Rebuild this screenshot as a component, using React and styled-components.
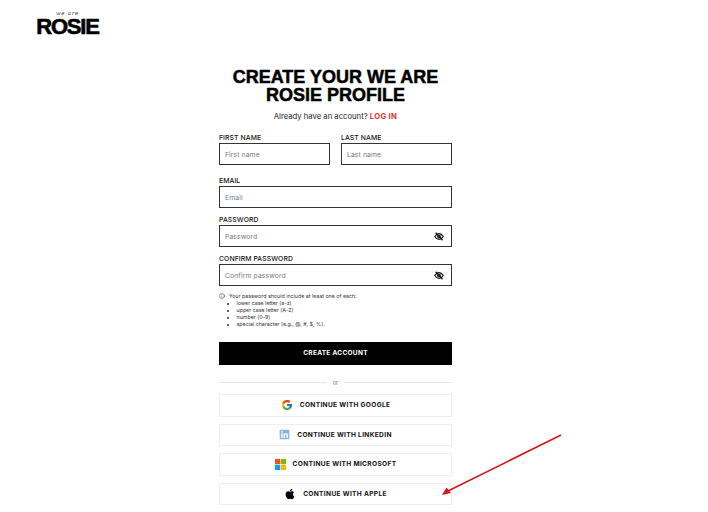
import React from 'react';
import styled, { createGlobalStyle } from 'styled-components';
import { FcGoogle } from 'react-icons/fc';
import { FaApple, FaLinkedin } from 'react-icons/fa';
import { Info } from 'lucide-react';

const Global = createGlobalStyle`
  html, body { margin: 0; padding: 0; background: #fff; }
  body { font-family: "Inter", "Liberation Sans", sans-serif; color: #111; }
  * { box-sizing: border-box; }
`;

const Page = styled.div`
  position: relative;
  width: 708px;
  height: 512px;
  overflow: hidden;
  background: #fff;
`;

const Header = styled.header`
  height: 40px;
  padding: 10px 0 0 36px;
`;

const Logo = styled.div`
  display: flex;
  flex-direction: column;
  align-items: center;
  width: 63px;
`;

const LogoScript = styled.span`
  font-family: "DejaVu Serif", serif;
  font-style: italic;
  font-size: 5.5px;
  line-height: 7px;
  letter-spacing: 0.7px;
  color: #333;
`;

const LogoWord = styled.span`
  font-family: "Liberation Sans", sans-serif;
  font-weight: 700;
  font-size: 22px;
  line-height: 20px;
  letter-spacing: -1.2px;
  color: #000;
  -webkit-text-stroke: 0.6px #000;
`;

const Main = styled.main`
  width: 233px;
  margin-left: 219px;
  padding-top: 29px;
`;

const Title = styled.h1`
  margin: 0 -20px;
  text-align: center;
  font-family: "Liberation Sans", sans-serif;
  font-weight: 700;
  font-size: 18px;
  line-height: 17.5px;
  color: #000;
  -webkit-text-stroke: 0.5px #000;
`;

const Sub = styled.p`
  margin: 7px 0 0;
  text-align: center;
  font-size: 7.7px;
  line-height: 12px;
  color: #222;
`;

const LogIn = styled.a`
  color: #e8352a;
  font-weight: 700;
  letter-spacing: 0.3px;
`;

const Row = styled.div`
  display: grid;
  grid-template-columns: 1fr 1fr;
  gap: 11px;
  margin-top: 9px;
`;

const Field = styled.div`
  margin-bottom: ${p => p.$mb ?? 10}px;
`;

const Label = styled.label`
  display: block;
  font-size: 6.8px;
  line-height: 11px;
  font-weight: 500;
  letter-spacing: 0.1px;
  color: #111;
`;

const InputBox = styled.div`
  display: flex;
  align-items: center;
  justify-content: space-between;
  height: 22px;
  padding: 0 7px 0 5px;
  border: 1px solid #333;
  background: #fff;
`;

const Placeholder = styled.span`
  font-size: 6.8px;
  letter-spacing: 0.1px;
  color: ${p => p.$blue ? '#6b7f96' : '#777'};
`;

const Note = styled.div`
  position: relative;
  margin-top: 7px;
  padding-left: 10px;
  font-size: 5.3px;
  line-height: 7.1px;
  color: #333;
`;

const NoteIcon = styled.span`
  position: absolute;
  left: 0;
  top: 0;
  display: flex;
`;

const NoteList = styled.ul`
  margin: 0;
  padding: 0 0 0 7.5px;
  list-style: disc;
`;

const Primary = styled.div`
  display: flex;
  align-items: center;
  justify-content: center;
  height: 23px;
  margin-top: 13.5px;
  background: #000;
  color: #fff;
  font-size: 6.5px;
  font-weight: 700;
  letter-spacing: 0.3px;
`;

const Divider = styled.div`
  display: flex;
  align-items: center;
  gap: 6px;
  height: 8px;
  margin: 14px 0 7px;
  font-size: 5.5px;
  color: #777;
  &::before, &::after {
    content: "";
    flex: 1;
    height: 1px;
    background: #e8e8e8;
  }
`;

const Social = styled.div`
  display: flex;
  align-items: center;
  justify-content: center;
  gap: 7px;
  height: 22.6px;
  margin-bottom: 7px;
  border: 1px solid #efefef;
  font-size: 6.6px;
  font-weight: 700;
  letter-spacing: 0.33px;
  color: #111;
`;

const IconSvg = styled.svg`
  display: block;
  flex: none;
`;

const Arrow = styled.svg`
  position: absolute;
  left: 0;
  top: 0;
  pointer-events: none;
`;

const Microsoft = () => (
  <IconSvg width="11" height="11" viewBox="0 0 11 11">
    <rect x="0" y="0" width="5.2" height="5.2" fill="#f25022" />
    <rect x="5.8" y="0" width="5.2" height="5.2" fill="#7fba00" />
    <rect x="0" y="5.8" width="5.2" height="5.2" fill="#00a4ef" />
    <rect x="5.8" y="5.8" width="5.2" height="5.2" fill="#ffb900" />
  </IconSvg>
);

// heavy crossed-out eye used on the password fields
const EyeSlash = () => (
  <IconSvg width="10" height="9" viewBox="0 0 20 18" fill="none" stroke="#111">
    <path d="M1.5 9C4 5 7 3.2 10 3.2S16 5 18.5 9C16 13 13 14.8 10 14.8S4 13 1.5 9Z" strokeWidth="2.4" />
    <circle cx="10" cy="9" r="2.6" strokeWidth="2.2" />
    <path d="M3.5 1.5L17 16.5" strokeWidth="2.6" />
  </IconSvg>
);

const socials = [
  { label: 'CONTINUE WITH GOOGLE', icon: <FcGoogle size={12} /> },
  { label: 'CONTINUE WITH LINKEDIN', icon: <FaLinkedin size={11} color="#8db2e6" /> },
  { label: 'CONTINUE WITH MICROSOFT', icon: <Microsoft /> },
  { label: 'CONTINUE WITH APPLE', icon: <FaApple size={12} color="#000" /> },
];

export default function App() {
  return (
    <Page>
      <Global />
      <Header>
        <Logo>
          <LogoScript>we are</LogoScript>
          <LogoWord>ROSIE</LogoWord>
        </Logo>
      </Header>
      <Main>
        <Title>CREATE YOUR WE ARE<br />ROSIE PROFILE</Title>
        <Sub>Already have an account? <LogIn>LOG IN</LogIn></Sub>
        <Row>
          <Field>
            <Label>FIRST NAME</Label>
            <InputBox><Placeholder>First name</Placeholder></InputBox>
          </Field>
          <Field>
            <Label>LAST NAME</Label>
            <InputBox><Placeholder>Last name</Placeholder></InputBox>
          </Field>
        </Row>
        <Field $mb={6}>
          <Label>EMAIL</Label>
          <InputBox><Placeholder $blue>Email</Placeholder></InputBox>
        </Field>
        <Field $mb={6}>
          <Label>PASSWORD</Label>
          <InputBox>
            <Placeholder>Password</Placeholder>
            <EyeSlash />
          </InputBox>
        </Field>
        <Field $mb={6}>
          <Label>CONFIRM PASSWORD</Label>
          <InputBox>
            <Placeholder>Confirm password</Placeholder>
            <EyeSlash />
          </InputBox>
        </Field>
        <Note>
          <NoteIcon><Info size={6} color="#333" /></NoteIcon>
          Your password should include at least one of each:
          <NoteList>
            <li>lower case letter (a-z)</li>
            <li>upper case letter (A-Z)</li>
            <li>number (0-9)</li>
            <li>special character (e.g., @, #, $, %).</li>
          </NoteList>
        </Note>
        <Primary>CREATE ACCOUNT</Primary>
        <Divider>or</Divider>
        {socials.map(s => (
          <Social key={s.label}>{s.icon}{s.label}</Social>
        ))}
      </Main>
      <Arrow width="708" height="512" viewBox="0 0 708 512">
        <line x1="561" y1="435" x2="448" y2="491" stroke="#d9161c" strokeWidth="1.6" />
        <polygon points="442,495 446.5,487.5 451,493" fill="#d9161c" />
      </Arrow>
    </Page>
  );
}
